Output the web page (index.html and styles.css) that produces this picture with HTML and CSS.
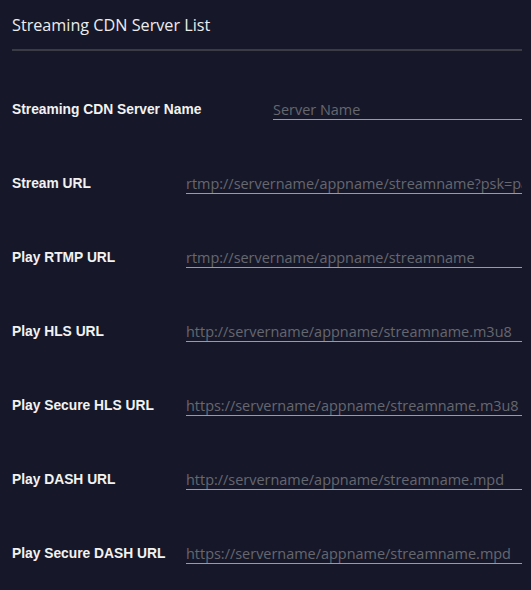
FILE: index.html
```html
<!DOCTYPE html>
<html>
<head>
<meta charset="utf-8">
<link rel="stylesheet" href="styles.css">
</head>
<body>
<div class="panel">
  <h1 class="title">Streaming CDN Server List</h1>
  <div class="form">
    <div class="row">
      <label class="label label-wide">Streaming CDN Server Name</label>
      <input class="field" type="text" placeholder="Server Name">
    </div>
    <div class="row">
      <label class="label">Stream URL</label>
      <input class="field" type="text" placeholder="rtmp://servername/appname/streamname?psk=password">
    </div>
    <div class="row">
      <label class="label">Play RTMP URL</label>
      <input class="field" type="text" placeholder="rtmp://servername/appname/streamname">
    </div>
    <div class="row">
      <label class="label">Play HLS URL</label>
      <input class="field" type="text" placeholder="http://servername/appname/streamname.m3u8">
    </div>
    <div class="row">
      <label class="label">Play Secure HLS URL</label>
      <input class="field" type="text" placeholder="https://servername/appname/streamname.m3u8">
    </div>
    <div class="row">
      <label class="label">Play DASH URL</label>
      <input class="field" type="text" placeholder="http://servername/appname/streamname.mpd">
    </div>
    <div class="row">
      <label class="label">Play Secure DASH URL</label>
      <input class="field" type="text" placeholder="https://servername/appname/streamname.mpd">
    </div>
  </div>
</div>
</body>
</html>
```
FILE: styles.css
```css
html, body {
  margin: 0;
  padding: 0;
  background: #161829;
  height: 100%;
}
.panel {
  padding: 0 9px 0 12px;
}
.title {
  margin: 0;
  padding-top: 14px;
  padding-bottom: 13px;
  font-family: "Open Sans", sans-serif;
  font-weight: 400;
  font-size: 16.2px;
  line-height: 22px;
  color: #ececec;
  border-bottom: 2px solid #3a3b45;
}
.form {
  padding-top: 48px;
  display: flex;
  flex-direction: column;
  gap: 53px;
}
.row {
  display: flex;
  align-items: center;
  height: 21px;
}
.label {
  flex: 0 0 174px;
  font-family: "Liberation Sans", Arial, sans-serif;
  font-weight: 700;
  font-size: 13.8px;
  line-height: 16px;
  color: #f2f2f2;
  margin-top: 1px;
}
.label-wide {
  flex-basis: 261px;
}
.field {
  flex: 1 1 auto;
  min-width: 0;
  align-self: stretch;
  background: transparent;
  border: 0;
  border-bottom: 1px solid #9a9a9f;
  outline: none;
  padding: 2px 0 1px 0;
  margin: 0;
  box-sizing: border-box;
  height: 21px;
  font-family: "Open Sans", sans-serif;
  font-size: 14.45px;
  line-height: 18px;
  color: #ccc;
}
.field::placeholder {
  color: #66676f;
  opacity: 1;
}
```
